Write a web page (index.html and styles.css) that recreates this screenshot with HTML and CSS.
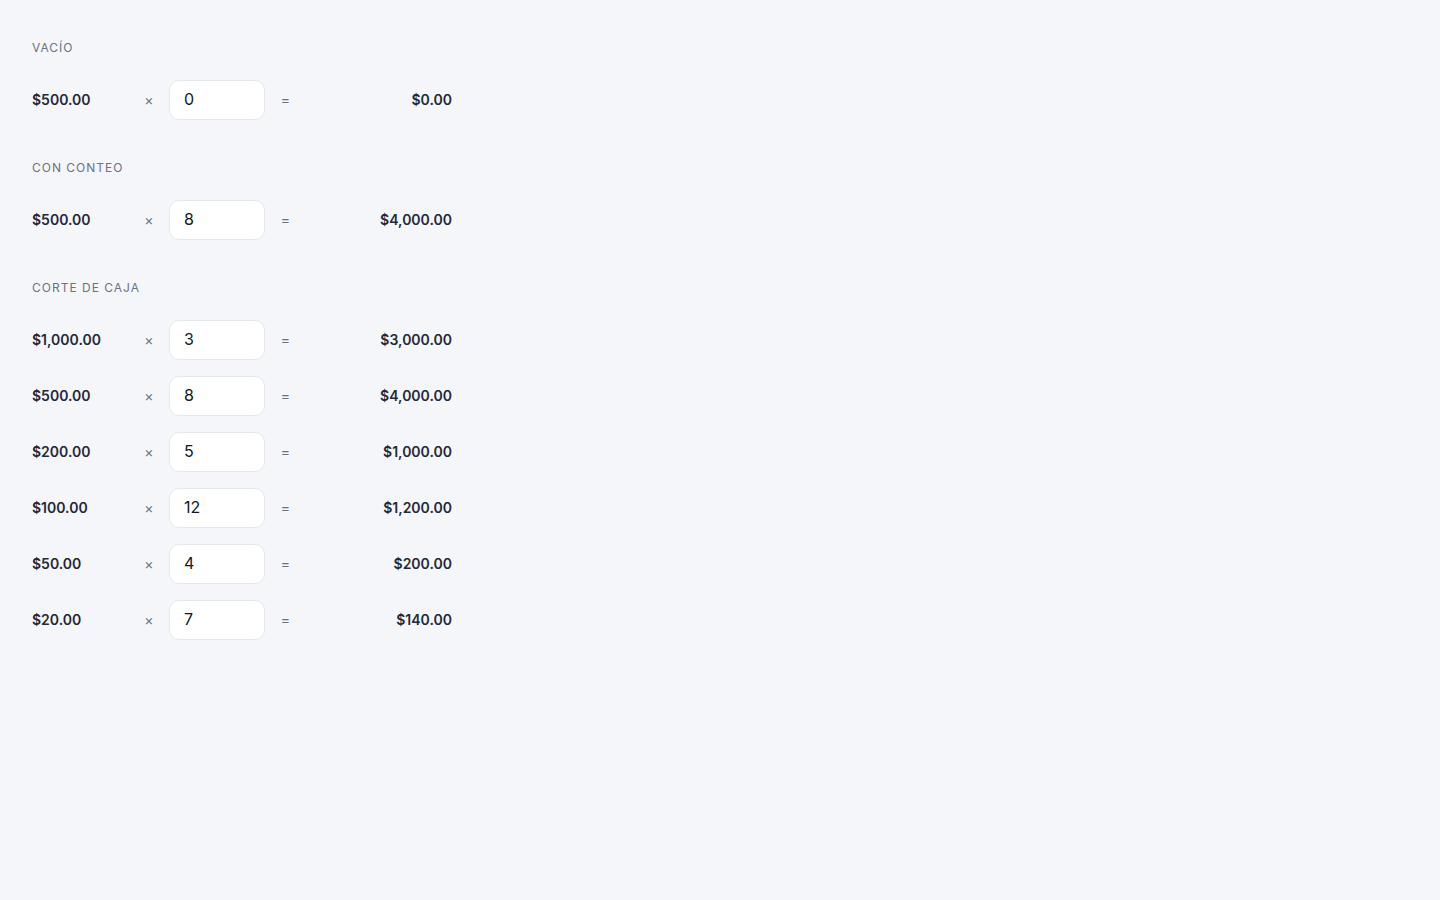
FILE: index.html
```html
<!DOCTYPE html>
<html lang="es">
<head>
  <meta charset="UTF-8" />
  <meta name="viewport" content="width=device-width, initial-scale=1.0"/>
  <title>Corte de caja</title>
  <link rel="stylesheet" href="styles.css">
</head>
<body>

  <div class="page">

    <section class="group">
      <div class="group-label">Vacío</div>
      <div class="row">
        <span class="denom">$500.00</span>
        <span class="op">×</span>
        <input type="text" class="qty" value="0">
        <span class="op">=</span>
        <span class="total">$0.00</span>
      </div>
    </section>

    <section class="group">
      <div class="group-label">Con conteo</div>
      <div class="row">
        <span class="denom">$500.00</span>
        <span class="op">×</span>
        <input type="text" class="qty" value="8">
        <span class="op">=</span>
        <span class="total">$4,000.00</span>
      </div>
    </section>

    <section class="group">
      <div class="group-label">Corte de caja</div>
      <div class="row">
        <span class="denom">$1,000.00</span>
        <span class="op">×</span>
        <input type="text" class="qty" value="3">
        <span class="op">=</span>
        <span class="total">$3,000.00</span>
      </div>
      <div class="row">
        <span class="denom">$500.00</span>
        <span class="op">×</span>
        <input type="text" class="qty" value="8">
        <span class="op">=</span>
        <span class="total">$4,000.00</span>
      </div>
      <div class="row">
        <span class="denom">$200.00</span>
        <span class="op">×</span>
        <input type="text" class="qty" value="5">
        <span class="op">=</span>
        <span class="total">$1,000.00</span>
      </div>
      <div class="row">
        <span class="denom">$100.00</span>
        <span class="op">×</span>
        <input type="text" class="qty" value="12">
        <span class="op">=</span>
        <span class="total">$1,200.00</span>
      </div>
      <div class="row">
        <span class="denom">$50.00</span>
        <span class="op">×</span>
        <input type="text" class="qty" value="4">
        <span class="op">=</span>
        <span class="total">$200.00</span>
      </div>
      <div class="row">
        <span class="denom">$20.00</span>
        <span class="op">×</span>
        <input type="text" class="qty" value="7">
        <span class="op">=</span>
        <span class="total">$140.00</span>
      </div>
    </section>

  </div>

</body>
</html>
```

FILE: styles.css
```css
body {
  margin: 0;
  font-family: Inter, "Noto Sans", Arial, sans-serif;
  background: #f5f6fa;
  color: #1f2937;
}

.page {
  padding: 40px 32px;
  width: 420px;
  display: flex;
  flex-direction: column;
  gap: 40px;
}

.group {
  display: flex;
  flex-direction: column;
  gap: 16px;
}

.group-label {
  font-size: 12px;
  line-height: 16px;
  letter-spacing: 1px;
  text-transform: uppercase;
  color: #6b7280;
  margin-bottom: 8px;
}

.row {
  display: grid;
  grid-template-columns: 97px 40px 96px 41px 1fr;
  align-items: center;
  height: 40px;
}

.denom,
.op,
.total {
  line-height: 18px;
  padding-bottom: 1px;
}

.denom {
  font-size: 14px;
  font-weight: 600;
  color: #1f2937;
}

.op {
  text-align: center;
  font-size: 14px;
  color: #6b7280;
}

.qty {
  box-sizing: border-box;
  width: 96px;
  height: 40px;
  padding: 0 14px 3px;
  border: 1px solid #e5e7eb;
  border-radius: 10px;
  background: #fff;
  font-family: inherit;
  font-size: 16px;
  color: #111827;
  outline: none;
}

.total {
  text-align: right;
  font-size: 14px;
  font-weight: 600;
  color: #1f2937;
}
```
